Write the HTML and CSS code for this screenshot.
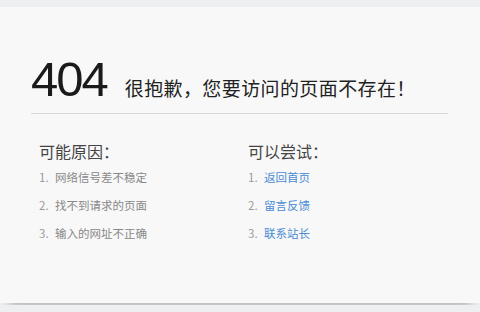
FILE: index.html
```html
<!DOCTYPE html>
<html lang="zh-CN">
<head>
<meta charset="utf-8">
<title>404</title>
<link rel="stylesheet" href="styles.css">
</head>
<body>
<div class="page">
  <div class="card">
    <div class="head">
      <span class="code">404</span>
      <span class="msg">很抱歉，您要访问的页面不存在！</span>
    </div>
    <div class="cols">
      <div class="col">
        <h3 class="title">可能原因：</h3>
        <ol class="list">
          <li>网络信号差不稳定</li>
          <li>找不到请求的页面</li>
          <li>输入的网址不正确</li>
        </ol>
      </div>
      <div class="col">
        <h3 class="title">可以尝试：</h3>
        <ol class="list">
          <li><a href="#">返回首页</a></li>
          <li><a href="#">留言反馈</a></li>
          <li><a href="#">联系站长</a></li>
        </ol>
      </div>
    </div>
  </div>
</div>
</body>
</html>
```
FILE: styles.css
```css
html, body {
  margin: 0;
  padding: 0;
}
body {
  background: #eeeff1;
  font-family: "Noto Sans CJK SC", "Liberation Sans", sans-serif;
}
.page {
  padding-top: 7px;
  height: 305px;
  box-sizing: border-box;
}
.card {
  background: #f8f8f9;
  height: 296px;
  box-sizing: border-box;
  padding: 47px 32px 0 31px;
  box-shadow: 0 12px 10px -9px rgba(0, 0, 0, 0.28);
}
.head {
  display: flex;
  align-items: baseline;
  border-bottom: 1px solid #d8d8d8;
  padding-bottom: 9px;
}
.code {
  font-family: "Liberation Sans", Arial, sans-serif;
  font-size: 49px;
  line-height: 50px;
  color: #1a1a1a;
  letter-spacing: -2px;
}
.msg {
  margin-left: 18px;
  font-size: 19px;
  line-height: 24px;
  letter-spacing: 0.4px;
  color: #222;
}
.cols {
  display: grid;
  grid-template-columns: 209px 1fr;
  padding-left: 8px;
  margin-top: 27px;
}
.title {
  margin: 0;
  font-size: 16px;
  font-weight: normal;
  line-height: 20px;
  color: #444;
}
.list {
  margin: 2px 0 0;
  padding: 0;
  list-style: none;
  counter-reset: n;
}
.list li {
  counter-increment: n;
  font-size: 11.5px;
  line-height: 28px;
  color: #888;
}
.list li::before {
  content: counter(n) ".";
  display: inline-block;
  width: 16px;
  color: #999;
}
.list a {
  color: #4a8bd4;
  text-decoration: none;
}
```
